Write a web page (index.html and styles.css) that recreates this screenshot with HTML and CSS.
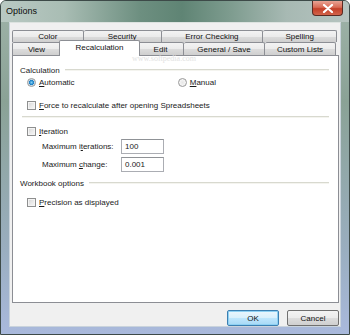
FILE: index.html
```html
<!DOCTYPE html>
<html>
<head>
<meta charset="utf-8">
<link rel="stylesheet" href="styles.css">
</head>
<body>
<div class="window">
  <div class="titlebar">
    <span class="title">Options</span>
    <div class="close">
      <svg width="12" height="9" viewBox="0 0 12 9"><path d="M2 1 L10 8 M10 1 L2 8" stroke="#fff" stroke-width="2.2" stroke-linecap="round"/></svg>
    </div>
  </div>
  <div class="client">
    <div class="tabs">
      <div class="tabrow">
        <div class="tab w72">Color</div>
        <div class="tab w78">Security</div>
        <div class="tab w102">Error Checking</div>
        <div class="tab w74">Spelling</div>
      </div>
      <div class="tabrow">
        <div class="tab w49">View</div>
        <div class="tab w77 active">Recalculation</div>
        <div class="tab w48">Edit</div>
        <div class="tab w81">General / Save</div>
        <div class="tab w71">Custom Lists</div>
      </div>
    </div>
    <div class="panel">
      <div class="group g-calc"><span class="glabel">Calculation</span><span class="gline"></span></div>
      <div class="row r-radio">
        <label class="opt"><span class="radio on"></span><span><u>A</u>utomatic</span></label>
        <label class="opt manual"><span class="radio"></span><span><u>M</u>anual</span></label>
      </div>
      <div class="row r-force">
        <label class="opt"><span class="check"></span><span><u>F</u>orce to recalculate after opening Spreadsheets</span></label>
      </div>
      <div class="sep"></div>
      <div class="row r-iter">
        <label class="opt"><span class="check"></span><span><u>I</u>teration</span></label>
      </div>
      <div class="field f1"><span class="flabel">Maximum i<u>t</u>erations:</span><span class="input">100</span></div>
      <div class="field f2"><span class="flabel">Maximum <u>c</u>hange:</span><span class="input">0.001</span></div>
      <div class="group g-wb"><span class="glabel">Workbook options</span><span class="gline"></span></div>
      <div class="row r-prec">
        <label class="opt"><span class="check"></span><span><u>P</u>recision as displayed</span></label>
      </div>
      <span class="wm-url">www.softpedia.com</span>
    </div>
    <div class="buttons">
      <div class="btn default">OK</div>
      <div class="btn">Cancel</div>
    </div>
  </div>
</div>
</body>
</html>
```
FILE: styles.css
```css
html, body {
  margin: 0;
  padding: 0;
  background: #fff;
}
body {
  font-family: "Liberation Sans", Arial, sans-serif;
  font-size: 8px;
  color: #1a1a1a;
}
.window {
  position: relative;
  width: 350px;
  height: 335px;
  box-sizing: border-box;
  padding: 21px 8px 7px 8px;
  display: flex;
  flex-direction: column;
  background: linear-gradient(180deg, #9fb3a9 0%, #8aa296 30%, #9aaec0 75%, #a9b9dc 100%);
  border: 1px solid #3d4a48;
  border-radius: 6px 6px 0 0;
  overflow: hidden;
}
.titlebar {
  position: absolute;
  left: 0;
  top: 0;
  right: 0;
  height: 21px;
  display: flex;
  align-items: center;
  justify-content: space-between;
  background: linear-gradient(90deg, #b9c9c3 0%, #a9bdb4 18%, #6d8f80 40%, #5f8474 52%, #7e9c8f 66%, #a7b9b3 82%, #b6c4c0 100%);
}
.title {
  padding-left: 5px;
  font-size: 9px;
  color: #0c0c0c;
  padding-bottom: 1px;
}
.close {
  align-self: flex-start;
  margin-right: 6px;
  width: 31px;
  height: 15px;
  box-sizing: border-box;
  border: 1px solid #5a2a22;
  border-top: none;
  border-radius: 0 0 4px 4px;
  background: linear-gradient(180deg, #e9a394 0%, #d86b55 45%, #c33f28 55%, #d2644a 100%);
  display: flex;
  align-items: center;
  justify-content: center;
}
.client {
  flex: 1;
  background: #f0f0f0;
  border: 1px solid #c9d3dc;
  border-top-color: #dde3e0;
  box-sizing: border-box;
  padding: 7px 3px 0 2px;
  display: flex;
  flex-direction: column;
}
.tabs {
  height: 25px;
  display: flex;
  flex-direction: column;
  position: relative;
  z-index: 2;
}
.tabrow {
  display: flex;
  height: 12px;
}
.tabrow + .tabrow {
  height: 13px;
}
.tab {
  box-sizing: border-box;
  height: 100%;
  border: 1px solid #8c8e94;
  border-bottom: none;
  border-left: none;
  border-radius: 2px 2px 0 0;
  background: linear-gradient(180deg, #f3f3f3 0%, #ebebeb 50%, #dcdcdc 51%, #cfcfcf 100%);
  display: flex;
  align-items: center;
  justify-content: center;
  color: #111;
}
.tab:first-child {
  border-left: 1px solid #8c8e94;
}
.tab.active {
  background: #fff;
  height: 16px;
  margin-top: -2px;
  margin-left: -2px;
  margin-right: -2px;
  border-left: 1px solid #8c8e94;
  padding-bottom: 2px;
  position: relative;
  z-index: 3;
}
.w72 { width: 72px; }
.w78 { width: 78px; }
.w102 { width: 102px; }
.w74 { width: 74px; }
.w49 { width: 49px; }
.w77 { width: 81px; }
.w48 { width: 46px; }
.w81 { width: 81px; }
.w71 { width: 71px; }
.panel {
  position: relative;
  height: 248px;
  width: 327px;
  box-sizing: border-box;
  background: #fff;
  border: 1px solid #8c8e94;
  display: flex;
  flex-direction: column;
  padding: 0 9px 0 7px;
}
.group {
  display: flex;
  align-items: center;
  height: 12px;
  color: #1a1a1a;
}
.glabel {
  padding-right: 5px;
}
.gline {
  flex: 1;
  height: 1px;
  background: #d8d9cf;
  border-bottom: 1px solid #f4f4ef;
}
.g-calc { margin-top: 8px; }
.row {
  display: flex;
  align-items: center;
  height: 12px;
}
.r-radio { margin-top: 0; padding-left: 7px; }
.r-force { margin-top: 11px; padding-left: 7px; }
.r-iter { margin-top: 7px; padding-left: 7px; }
.r-prec { margin-top: 7px; padding-left: 7px; }
.opt {
  display: flex;
  align-items: center;
  gap: 3px;
}
.manual {
  margin-left: auto;
  margin-right: 113px;
}
.radio {
  width: 9px;
  height: 9px;
  box-sizing: border-box;
  border-radius: 50%;
  border: 1px solid #9a9a9a;
  background: radial-gradient(circle, #e6e6e6 0%, #f4f4f4 60%, #dcdcdc 100%);
}
.radio.on {
  background: radial-gradient(circle, #7fd0f5 0%, #1e7fc4 45%, #c0d6e6 55%, #eef3f6 100%);
}
.check {
  width: 9px;
  height: 9px;
  box-sizing: border-box;
  border: 1px solid #8e8f8f;
  background: linear-gradient(135deg, #d4d4d4 0%, #ececec 60%, #f6f6f6 100%);
  box-shadow: inset 0 0 0 1px #f4f4f4;
}
.sep {
  margin-top: 5px;
  margin-left: 2px;
  height: 1px;
  background: #d8d9cf;
  border-bottom: 1px solid #f4f4ef;
}
.field {
  display: flex;
  align-items: center;
  height: 15px;
  padding-left: 22px;
}
.f1 { margin-top: 2px; }
.f2 { margin-top: 3px; }
.flabel {
  width: 79px;
}
.input {
  box-sizing: border-box;
  width: 43px;
  height: 15px;
  border: 1px solid #abadb3;
  border-top-color: #8f9296;
  padding-left: 3px;
  display: flex;
  align-items: center;
}
.g-wb { margin-top: 5px; }
.wm-url {
  position: absolute;
  left: 119px;
  top: -2px;
  font-family: "Liberation Serif", serif;
  font-size: 8px;
  color: #e2e2e2;
}
.buttons {
  display: flex;
  justify-content: flex-end;
  gap: 8px;
  margin-top: 7px;
  width: 327px;
}
.btn {
  box-sizing: border-box;
  width: 52px;
  height: 16px;
  border: 1px solid #707070;
  border-radius: 2px;
  background: linear-gradient(180deg, #f3f3f3 0%, #ebebeb 50%, #dddddd 51%, #cfcfcf 100%);
  display: flex;
  align-items: center;
  justify-content: center;
  color: #111;
}
.btn.default {
  border-color: #3c7fb1;
  background: linear-gradient(180deg, #eaf6fd 0%, #d9f0fc 50%, #bee6fd 51%, #a7d9f5 100%);
  box-shadow: inset 0 0 0 1px #8ed1f3;
}
```
